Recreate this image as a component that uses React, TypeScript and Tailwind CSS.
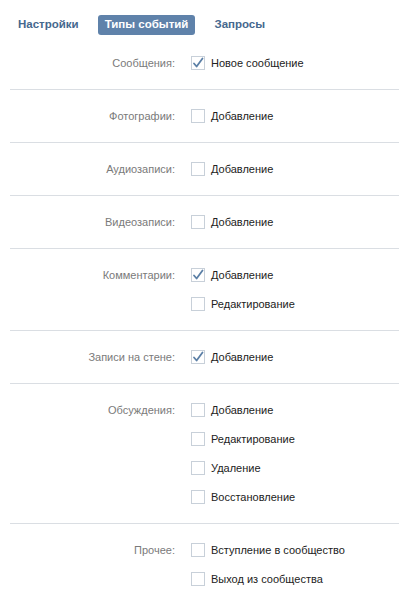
import React from 'react'

type Item = { label: string; checked?: boolean }
type Group = { title: string; items: Item[] }

const GROUPS: Group[] = [
  { title: 'Фотографии:', items: [{ label: 'Добавление' }] },
  { title: 'Аудиозаписи:', items: [{ label: 'Добавление' }] },
  { title: 'Видеозаписи:', items: [{ label: 'Добавление' }] },
  { title: 'Комментарии:', items: [{ label: 'Добавление', checked: true }, { label: 'Редактирование' }] },
  { title: 'Записи на стене:', items: [{ label: 'Добавление', checked: true }] },
  {
    title: 'Обсуждения:',
    items: [{ label: 'Добавление' }, { label: 'Редактирование' }, { label: 'Удаление' }, { label: 'Восстановление' }],
  },
  { title: 'Прочее:', items: [{ label: 'Вступление в сообщество' }, { label: 'Выход из сообщества' }] },
]

function Checkbox({ checked }: { checked?: boolean }) {
  return (
    <div className="w-[14px] h-[14px] shrink-0 border border-[#c8d0d9] bg-white flex items-center justify-center">
      {checked && (
        <svg width="12" height="12" viewBox="0 0 12 12" fill="none">
          <path d="M2 6.5l2.6 3L10.5 1.5" stroke="#5b7fa6" strokeWidth="1.8" strokeLinecap="round" strokeLinejoin="round" />
        </svg>
      )}
    </div>
  )
}

function Section({ title, items }: Group) {
  return (
    <div className="flex flex-col gap-[1px]">
      {items.map((item, i) => (
        <div key={i} className="flex items-center h-[28px]">
          <div className="w-[166px] shrink-0 text-right text-[#7a7a7a] pr-[1px]">{i === 0 ? title : ''}</div>
          <div className="ml-[15px]">
            <Checkbox checked={item.checked} />
          </div>
          <span className="ml-[6px] text-[#222222]">{item.label}</span>
        </div>
      ))}
    </div>
  )
}

export default function App() {
  return (
    <div
      className="w-[399px] h-[593px] overflow-hidden bg-white text-[11px] leading-none"
      style={{ fontFamily: "'Liberation Sans', Arial, sans-serif" }}
    >
      {/* Tabs */}
      <div className="flex items-center pl-[9px] pt-[15px] h-[35px] font-bold text-[11.5px]">
        <div className="h-[20px] px-[9px] flex items-center text-[#45688e]">Настройки</div>
        <div className="h-[20px] px-[7px] ml-[10px] flex items-center text-white bg-[#5f82aa] rounded-[3px]">Типы событий</div>
        <div className="h-[20px] px-[9px] ml-[10px] flex items-center text-[#45688e]">Запросы</div>
      </div>

      {/* Settings */}
      <div className="pl-[10px]">
        <div className="pt-[14px] pb-[12px]">
          <Section title="Сообщения:" items={[{ label: 'Новое сообщение', checked: true }]} />
        </div>
        {GROUPS.map(g => (
          <div key={g.title} className="border-t border-[#dadee3] py-[12px]">
            <Section {...g} />
          </div>
        ))}
      </div>
    </div>
  )
}
